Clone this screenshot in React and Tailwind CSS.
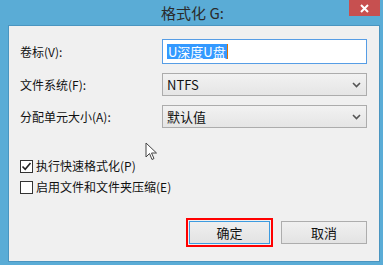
import React from "react";

const font = { fontFamily: '"Noto Sans CJK SC", "Noto Sans", sans-serif' };

function Chevron() {
  return (
    <svg width="9" height="6" viewBox="0 0 9 6" className="block">
      <path d="M1 1 L4.5 4.5 L8 1" stroke="#555" strokeWidth="1.6" fill="none" />
    </svg>
  );
}

function Select({ value }) {
  return (
    <div className="h-[23px] flex-1 border border-[#acacac] bg-gradient-to-b from-[#f2f2f2] to-[#e5e5e5] flex items-center justify-between pl-[4px] pr-[5px] text-[13px] text-[#111]">
      <span className="leading-none">{value}</span>
      <Chevron />
    </div>
  );
}

function Checkbox({ checked }) {
  return (
    <div className="w-[13px] h-[13px] border border-[#333] bg-white flex items-center justify-center shrink-0">
      {checked && (
        <svg width="11" height="11" viewBox="0 0 11 11">
          <path d="M1.5 5.5 L4.2 8.3 L9.5 2" stroke="#222" strokeWidth="1.6" fill="none" />
        </svg>
      )}
    </div>
  );
}

export default function App() {
  return (
    <div className="w-[383px] h-[265px] bg-[#5aacd6] flex flex-col overflow-hidden" style={font}>
      <div className="relative h-[25px] flex items-center justify-center">
        <span className="text-[15px] text-[#2a2a2a] leading-none pl-[2px]">格式化 G:</span>
        <div className="absolute right-[3px] top-0 w-[31px] h-[16px] bg-[#c75050] flex items-center justify-center">
          <svg width="9" height="9" viewBox="0 0 9 9">
            <path d="M1 1 L8 8 M8 1 L1 8" stroke="white" strokeWidth="2" />
          </svg>
        </div>
      </div>
      <div className="relative ml-[8px] mr-[3px] mb-[3px] flex-1 bg-[#f0f0f0] border border-[#4a95c0] pl-[11px] pr-[12px] pt-[13px] text-[12px] text-[#111]">
        <div className="flex items-center h-[25px]">
          <div className="w-[142px]">卷标(V):</div>
          <div className="flex-1 h-[25px] border border-[#569de5] bg-white flex items-center pl-[4px]">
            <span className="bg-[#3399ff] text-white text-[13px] leading-[15px] px-[1px] border-r border-[#e07000]">U深度U盘</span>
          </div>
        </div>
        <div className="flex items-center h-[23px] mt-[9px]">
          <div className="w-[142px]">文件系统(F):</div>
          <Select value="NTFS" />
        </div>
        <div className="flex items-center h-[23px] mt-[9px]">
          <div className="w-[142px]">分配单元大小(A):</div>
          <Select value="默认值" />
        </div>
        <div className="flex items-center gap-[3px] mt-[31px] h-[14px]">
          <Checkbox checked />
          <span>执行快速格式化(P)</span>
        </div>
        <div className="flex items-center gap-[3px] mt-[7px] h-[14px]">
          <Checkbox />
          <span>启用文件和文件夹压缩(E)</span>
        </div>
        <div className="flex justify-end gap-[8px] mt-[27px] pr-[0px]">
          <div className="w-[87px] h-[29px] border-2 border-[#ff0000] p-[1px] -mt-[3px]">
            <div className="w-full h-full border border-[#3c9be0] bg-gradient-to-b from-[#efefef] to-[#e3e3e3] flex items-center justify-center text-[13px]">
              确定
            </div>
          </div>
          <div className="w-[86px] h-[23px] border border-[#adadad] bg-gradient-to-b from-[#f0f0f0] to-[#e3e3e3] flex items-center justify-center text-[13px]">
            取消
          </div>
        </div>
        <svg className="absolute left-[136px] top-[116px]" width="14" height="20" viewBox="0 0 14 20">
          <path d="M1 1 L1 15 L4.5 11.5 L7 17.5 L9 16.5 L6.5 11 L11.5 11 Z" fill="white" stroke="#444" strokeWidth="1" strokeLinejoin="round" />
        </svg>
      </div>
    </div>
  );
}
